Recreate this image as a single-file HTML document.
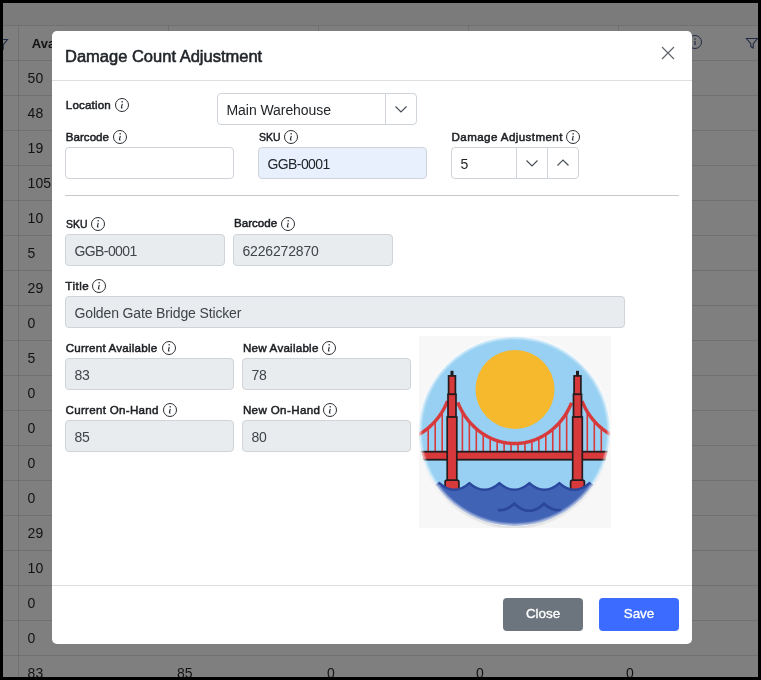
<!DOCTYPE html>
<html><head><meta charset="utf-8">
<style>
*{box-sizing:border-box;margin:0;padding:0}
html,body{width:761px;height:680px;overflow:hidden;background:#000;font-family:"Liberation Sans",sans-serif}
#bg{will-change:transform;position:absolute;left:3px;top:3px;width:755px;height:674px;background:#7f7f7f;overflow:hidden}
.hl{position:absolute;left:0;width:755px;height:1px;background:#6f7072}
.vl{position:absolute;width:1px;background:#6f7072}
.cell{position:absolute;font-size:14px;color:#111214;line-height:1;white-space:nowrap}
#modal{will-change:transform;position:absolute;left:52px;top:31px;width:640px;height:613px;background:#fff;border-radius:5px;overflow:hidden}
.a{position:absolute}
.title{font-size:16.5px;color:#212529;-webkit-text-stroke:0.55px #212529;white-space:nowrap;line-height:1}
.lbl{position:absolute;font-size:11.6px;color:#212529;-webkit-text-stroke:0.5px #1c1f23;color:#1c1f23;letter-spacing:0.2px;white-space:nowrap;line-height:1}
.ic{position:relative;vertical-align:top;top:-2.08px;margin-left:3px}
.inp{position:absolute;height:32px;border:1px solid #ced4da;border-radius:4px;background:#fff;font-size:14px;color:#212529;line-height:1;white-space:nowrap;letter-spacing:-0.15px}
.inp span{position:absolute;top:8.95px}
.dis{background:#e9ecef;color:#3f4449}
.btn{position:absolute;top:567px;width:80px;height:33px;border-radius:4px;color:#fff;font-size:13.4px;-webkit-text-stroke:0.35px #fff;text-align:center;line-height:32px}
</style></head><body>
<div id="bg">
<div class="a" style="left:0;top:0;width:755px;height:22px;background:#7b7b7c"></div>
<div class="hl" style="top:22px"></div>
<div class="hl" style="top:57px"></div>
<div class="hl" style="top:92px"></div>
<div class="hl" style="top:127px"></div>
<div class="hl" style="top:162px"></div>
<div class="hl" style="top:197px"></div>
<div class="hl" style="top:232px"></div>
<div class="hl" style="top:267px"></div>
<div class="hl" style="top:302px"></div>
<div class="hl" style="top:337px"></div>
<div class="hl" style="top:372px"></div>
<div class="hl" style="top:407px"></div>
<div class="hl" style="top:442px"></div>
<div class="hl" style="top:477px"></div>
<div class="hl" style="top:512px"></div>
<div class="hl" style="top:547px"></div>
<div class="hl" style="top:582px"></div>
<div class="hl" style="top:617px"></div>
<div class="hl" style="top:652px"></div>
<div class="vl" style="left:15px;top:22px;height:660px"></div>
<div class="vl" style="left:165px;top:22px;height:35px"></div>
<div class="vl" style="left:315px;top:22px;height:35px"></div>
<div class="vl" style="left:465px;top:22px;height:35px"></div>
<div class="vl" style="left:615px;top:22px;height:35px"></div>
<div class="cell" style="left:24.6px;top:67.5px">50</div>
<div class="cell" style="left:24.6px;top:102.5px">48</div>
<div class="cell" style="left:24.6px;top:137.5px">19</div>
<div class="cell" style="left:24.6px;top:172.5px">105</div>
<div class="cell" style="left:24.6px;top:207.5px">10</div>
<div class="cell" style="left:24.6px;top:242.5px">5</div>
<div class="cell" style="left:24.6px;top:277.5px">29</div>
<div class="cell" style="left:24.6px;top:312.5px">0</div>
<div class="cell" style="left:24.6px;top:347.5px">5</div>
<div class="cell" style="left:24.6px;top:382.5px">0</div>
<div class="cell" style="left:24.6px;top:417.5px">0</div>
<div class="cell" style="left:24.6px;top:452.5px">0</div>
<div class="cell" style="left:24.6px;top:487.5px">0</div>
<div class="cell" style="left:24.6px;top:522.5px">29</div>
<div class="cell" style="left:24.6px;top:557.5px">10</div>
<div class="cell" style="left:24.6px;top:592.5px">0</div>
<div class="cell" style="left:24.6px;top:627.5px">0</div>
<div class="cell" style="left:24.6px;top:662.5px">83</div>
<div class="cell" style="left:174px;top:662.5px">85</div>
<div class="cell" style="left:324px;top:662.5px">0</div>
<div class="cell" style="left:473px;top:662.5px">0</div>
<div class="cell" style="left:623px;top:662.5px">0</div>
<div class="cell" style="left:28.8px;top:33.6px;font-weight:bold;font-size:13px">Avai</div>
<svg class="a" style="left:-8px;top:34px" width="14" height="14" viewBox="0 0 14 14"><path d="M1.5 2.5H12.5L8.2 7.6V12L5.8 10.6V7.6Z" fill="none" stroke="#1f2a44" stroke-width="1.1"/></svg>
<svg class="a" style="left:684px;top:31px" width="16" height="16" viewBox="0 0 16 16"><circle cx="8" cy="8" r="6.5" fill="none" stroke="#1f2a44" stroke-width="1"/><circle cx="8" cy="5" r="0.8" fill="#1f2a44"/><path d="M8 7V11" stroke="#1f2a44" stroke-width="1.2"/></svg>
<svg class="a" style="left:742px;top:33px" width="14" height="14" viewBox="0 0 14 14"><path d="M1.5 2.5H12.5L8.2 7.6V12L5.8 10.6V7.6Z" fill="none" stroke="#1f2a44" stroke-width="1.1"/></svg>
</div>
<div id="modal">
<div class="a title" style="left:13px;top:17.03px">Damage Count Adjustment</div>
<svg class="a" style="left:609px;top:15px" width="14" height="14" viewBox="0 0 14 14"><path d="M1 1L13 13M13 1L1 13" stroke="#5f646b" stroke-width="1.15" fill="none"/></svg>
<div class="a" style="left:0;top:49px;width:640px;height:1px;background:#dedede"></div>
<div class="lbl" style="left:13.8px;top:68.08px;letter-spacing:0.17px">Location</div><svg class="ic" style="position:absolute;margin:0;left:62.00px;top:66.00px" width="16" height="16" viewBox="0 0 16 16"><circle cx="8" cy="8" r="6.5" fill="none" stroke="#2b2f33" stroke-width="1"/><circle cx="8.15" cy="4.85" r="0.8" fill="#2b2f33"/><path d="M8.3 6.9L7.45 10.4Q7.3 11.2 8.5 10.9" fill="none" stroke="#2b2f33" stroke-width="1.15"/></svg>
<div class="inp " style="left:165px;top:62px;width:200px"><span style="left:8.5px;letter-spacing:-0.06px">Main Warehouse</span><div class="a" style="left:167px;top:0;width:1px;height:30px;background:#ced4da"></div><svg class="a" style="left:176px;top:9px" width="14" height="12" viewBox="0 0 14 12"><path d="M1.5 3.5L7 9L12.5 3.5" fill="none" stroke="#495057" stroke-width="1.2"/></svg></div>
<div class="lbl" style="left:13.8px;top:100.28px;letter-spacing:0.00px">Barcode</div><svg class="ic" style="position:absolute;margin:0;left:59.70px;top:98.10px" width="16" height="16" viewBox="0 0 16 16"><circle cx="8" cy="8" r="6.5" fill="none" stroke="#2b2f33" stroke-width="1"/><circle cx="8.15" cy="4.85" r="0.8" fill="#2b2f33"/><path d="M8.3 6.9L7.45 10.4Q7.3 11.2 8.5 10.9" fill="none" stroke="#2b2f33" stroke-width="1.15"/></svg>
<div class="inp " style="left:13px;top:116px;width:169px"></div>
<div class="lbl" style="left:206.5px;top:99.98px;letter-spacing:0.00px;transform:scaleX(0.9);transform-origin:0 0">SKU</div><svg class="ic" style="position:absolute;margin:0;left:230.60px;top:97.90px" width="16" height="16" viewBox="0 0 16 16"><circle cx="8" cy="8" r="6.5" fill="none" stroke="#2b2f33" stroke-width="1"/><circle cx="8.15" cy="4.85" r="0.8" fill="#2b2f33"/><path d="M8.3 6.9L7.45 10.4Q7.3 11.2 8.5 10.9" fill="none" stroke="#2b2f33" stroke-width="1.15"/></svg>
<div class="inp " style="left:206px;top:116px;width:169px;background:#e8f0fe"><span style="left:8.5px;letter-spacing:-0.6px">GGB-0001</span></div>
<div class="lbl" style="left:399.6px;top:100.18px;letter-spacing:0.40px">Damage Adjustment</div><svg class="ic" style="position:absolute;margin:0;left:513.00px;top:98.00px" width="16" height="16" viewBox="0 0 16 16"><circle cx="8" cy="8" r="6.5" fill="none" stroke="#2b2f33" stroke-width="1"/><circle cx="8.15" cy="4.85" r="0.8" fill="#2b2f33"/><path d="M8.3 6.9L7.45 10.4Q7.3 11.2 8.5 10.9" fill="none" stroke="#2b2f33" stroke-width="1.15"/></svg>
<div class="inp " style="left:399px;top:116px;width:128px"><span style="left:8.5px;letter-spacing:-0.4px">5</span><div class="a" style="left:64px;top:0;width:1px;height:30px;background:#ced4da"></div><div class="a" style="left:95px;top:0;width:1px;height:30px;background:#ced4da"></div><svg class="a" style="left:73px;top:9px" width="14" height="12" viewBox="0 0 14 12"><path d="M1.5 3.5L7 9L12.5 3.5" fill="none" stroke="#495057" stroke-width="1.2"/></svg><svg class="a" style="left:104px;top:9px" width="14" height="12" viewBox="0 0 14 12"><path d="M1.5 8.5L7 3L12.5 8.5" fill="none" stroke="#495057" stroke-width="1.2"/></svg></div>
<div class="a" style="left:13px;top:164px;width:614px;height:1px;background:#c9c9c9"></div>
<div class="lbl" style="left:13.5px;top:186.68px;letter-spacing:0.00px;transform:scaleX(0.9);transform-origin:0 0">SKU</div><svg class="ic" style="position:absolute;margin:0;left:37.60px;top:184.80px" width="16" height="16" viewBox="0 0 16 16"><circle cx="8" cy="8" r="6.5" fill="none" stroke="#2b2f33" stroke-width="1"/><circle cx="8.15" cy="4.85" r="0.8" fill="#2b2f33"/><path d="M8.3 6.9L7.45 10.4Q7.3 11.2 8.5 10.9" fill="none" stroke="#2b2f33" stroke-width="1.15"/></svg>
<div class="inp dis" style="left:13px;top:203px;width:160px"><span style="left:8.5px;letter-spacing:-0.6px">GGB-0001</span></div>
<div class="lbl" style="left:182.0px;top:186.48px;letter-spacing:0.00px">Barcode</div><svg class="ic" style="position:absolute;margin:0;left:227.60px;top:184.80px" width="16" height="16" viewBox="0 0 16 16"><circle cx="8" cy="8" r="6.5" fill="none" stroke="#2b2f33" stroke-width="1"/><circle cx="8.15" cy="4.85" r="0.8" fill="#2b2f33"/><path d="M8.3 6.9L7.45 10.4Q7.3 11.2 8.5 10.9" fill="none" stroke="#2b2f33" stroke-width="1.15"/></svg>
<div class="inp dis" style="left:181px;top:203px;width:160px"><span style="left:8.5px;letter-spacing:-0.17px">6226272870</span></div>
<div class="lbl" style="left:13.3px;top:248.78px;letter-spacing:0.50px">Title</div><svg class="ic" style="position:absolute;margin:0;left:39.00px;top:246.80px" width="16" height="16" viewBox="0 0 16 16"><circle cx="8" cy="8" r="6.5" fill="none" stroke="#2b2f33" stroke-width="1"/><circle cx="8.15" cy="4.85" r="0.8" fill="#2b2f33"/><path d="M8.3 6.9L7.45 10.4Q7.3 11.2 8.5 10.9" fill="none" stroke="#2b2f33" stroke-width="1.15"/></svg>
<div class="inp dis" style="left:13px;top:265px;width:560px"><span style="left:8.5px;letter-spacing:-0.14px">Golden Gate Bridge Sticker</span></div>
<div class="lbl" style="left:13.7px;top:310.78px;letter-spacing:0.21px">Current Available</div><svg class="ic" style="position:absolute;margin:0;left:108.80px;top:308.70px" width="16" height="16" viewBox="0 0 16 16"><circle cx="8" cy="8" r="6.5" fill="none" stroke="#2b2f33" stroke-width="1"/><circle cx="8.15" cy="4.85" r="0.8" fill="#2b2f33"/><path d="M8.3 6.9L7.45 10.4Q7.3 11.2 8.5 10.9" fill="none" stroke="#2b2f33" stroke-width="1.15"/></svg>
<div class="inp dis" style="left:13px;top:327px;width:169px"><span style="left:8.5px;letter-spacing:-0.4px">83</span></div>
<div class="lbl" style="left:190.9px;top:310.68px;letter-spacing:0.24px">New Available</div><svg class="ic" style="position:absolute;margin:0;left:269.40px;top:308.70px" width="16" height="16" viewBox="0 0 16 16"><circle cx="8" cy="8" r="6.5" fill="none" stroke="#2b2f33" stroke-width="1"/><circle cx="8.15" cy="4.85" r="0.8" fill="#2b2f33"/><path d="M8.3 6.9L7.45 10.4Q7.3 11.2 8.5 10.9" fill="none" stroke="#2b2f33" stroke-width="1.15"/></svg>
<div class="inp dis" style="left:190px;top:327px;width:169px"><span style="left:8.5px;letter-spacing:-0.4px">78</span></div>
<div class="lbl" style="left:13.5px;top:372.98px;letter-spacing:0.29px">Current On-Hand</div><svg class="ic" style="position:absolute;margin:0;left:110.40px;top:370.80px" width="16" height="16" viewBox="0 0 16 16"><circle cx="8" cy="8" r="6.5" fill="none" stroke="#2b2f33" stroke-width="1"/><circle cx="8.15" cy="4.85" r="0.8" fill="#2b2f33"/><path d="M8.3 6.9L7.45 10.4Q7.3 11.2 8.5 10.9" fill="none" stroke="#2b2f33" stroke-width="1.15"/></svg>
<div class="inp dis" style="left:13px;top:389px;width:169px"><span style="left:8.5px;letter-spacing:-0.4px">85</span></div>
<div class="lbl" style="left:190.9px;top:372.98px;letter-spacing:0.36px">New On-Hand</div><svg class="ic" style="position:absolute;margin:0;left:270.30px;top:370.80px" width="16" height="16" viewBox="0 0 16 16"><circle cx="8" cy="8" r="6.5" fill="none" stroke="#2b2f33" stroke-width="1"/><circle cx="8.15" cy="4.85" r="0.8" fill="#2b2f33"/><path d="M8.3 6.9L7.45 10.4Q7.3 11.2 8.5 10.9" fill="none" stroke="#2b2f33" stroke-width="1.15"/></svg>
<div class="inp dis" style="left:190px;top:389px;width:169px"><span style="left:8.5px;letter-spacing:-0.4px">80</span></div>
<svg class="a" style="left:367px;top:305px" width="192" height="192" viewBox="0 0 192 192">
<rect width="192" height="192" fill="#f7f7f7"/>
<defs><clipPath id="cc"><ellipse cx="95.5" cy="95.3" rx="95.3" ry="94.60000000000001"/></clipPath><filter id="sh" x="-10%" y="-10%" width="120%" height="120%"><feGaussianBlur stdDeviation="1.3"/></filter></defs>
<ellipse cx="95.5" cy="96.89999999999999" rx="94.6" ry="94.9" fill="#c9c9c9" filter="url(#sh)"/>
<ellipse cx="95.5" cy="95.3" rx="95.6" ry="94.9" fill="#ffffff"/>
<g clip-path="url(#cc)">
<rect width="192" height="192" fill="#97d0f2"/>
<circle cx="96.0" cy="53.4" r="39.5" fill="#f6b82c"/>
<rect x="42.60" y="75.92" width="1.6" height="39.78" fill="#d8393b"/>
<rect x="49.55" y="85.69" width="1.6" height="30.01" fill="#d8393b"/>
<rect x="56.50" y="92.80" width="1.6" height="22.90" fill="#d8393b"/>
<rect x="63.45" y="98.11" width="1.6" height="17.59" fill="#d8393b"/>
<rect x="70.40" y="101.88" width="1.6" height="13.82" fill="#d8393b"/>
<rect x="77.35" y="104.63" width="1.6" height="11.07" fill="#d8393b"/>
<rect x="84.30" y="106.50" width="1.6" height="9.20" fill="#d8393b"/>
<rect x="91.25" y="107.37" width="1.6" height="8.33" fill="#d8393b"/>
<rect x="98.20" y="107.42" width="1.6" height="8.28" fill="#d8393b"/>
<rect x="105.15" y="106.57" width="1.6" height="9.13" fill="#d8393b"/>
<rect x="112.10" y="104.86" width="1.6" height="10.84" fill="#d8393b"/>
<rect x="119.05" y="102.19" width="1.6" height="13.51" fill="#d8393b"/>
<rect x="126.00" y="98.31" width="1.6" height="17.39" fill="#d8393b"/>
<rect x="132.95" y="93.28" width="1.6" height="22.42" fill="#d8393b"/>
<rect x="139.90" y="86.25" width="1.6" height="29.45" fill="#d8393b"/>
<rect x="146.85" y="76.57" width="1.6" height="39.13" fill="#d8393b"/>
<rect x="8.40" y="92.07" width="1.6" height="23.63" fill="#d8393b"/>
<rect x="181.50" y="92.07" width="1.6" height="23.63" fill="#d8393b"/>
<rect x="15.40" y="85.11" width="1.6" height="30.59" fill="#d8393b"/>
<rect x="174.50" y="85.11" width="1.6" height="30.59" fill="#d8393b"/>
<rect x="22.40" y="75.81" width="1.6" height="39.89" fill="#d8393b"/>
<rect x="167.50" y="75.81" width="1.6" height="39.89" fill="#d8393b"/>
<polyline points="38.80,66.40 39.08,67.11 39.37,67.81 39.66,68.51 39.96,69.20 40.27,69.89 40.59,70.58 40.92,71.26 41.25,71.94 41.59,72.62 41.93,73.29 42.29,73.95 42.65,74.61 43.02,75.27 43.39,75.92 43.77,76.57 44.16,77.21 44.56,77.85 44.96,78.48 45.37,79.11 45.78,79.74 46.21,80.36 46.63,80.97 47.07,81.58 47.51,82.18 47.96,82.78 48.41,83.37 48.87,83.96 49.34,84.54 49.81,85.11 50.29,85.69 50.78,86.25 51.27,86.81 51.76,87.36 52.27,87.91 52.78,88.45 53.29,88.98 53.81,89.51 54.34,90.04 54.87,90.55 55.40,91.06 55.95,91.57 56.50,92.06 57.05,92.55 57.61,93.04 58.17,93.52 58.74,93.99 59.31,94.45 59.89,94.91 60.48,95.36 61.07,95.80 61.66,96.24 62.26,96.66 62.87,97.09 63.48,97.50 64.09,97.91 64.71,98.31 65.33,98.70 65.96,99.08 66.59,99.46 67.23,99.83 67.87,100.19 68.52,100.54 69.17,100.89 69.82,101.23 70.48,101.56 71.14,101.88 71.81,102.19 72.48,102.50 73.15,102.79 73.83,103.08 74.51,103.36 75.20,103.63 75.89,103.90 76.58,104.15 77.28,104.40 77.98,104.63 78.69,104.86 79.40,105.08 80.11,105.29 80.82,105.49 81.54,105.68 82.26,105.87 82.99,106.04 83.72,106.20 84.45,106.36 85.18,106.50 85.92,106.64 86.66,106.76 87.40,106.88 88.15,106.99 88.90,107.08 89.65,107.17 90.40,107.25 91.16,107.31 91.92,107.37 92.68,107.42 93.44,107.45 94.21,107.48 94.98,107.49 95.75,107.50 96.14,107.50 96.91,107.49 97.67,107.47 98.44,107.44 99.20,107.39 99.96,107.34 100.72,107.28 101.48,107.21 102.23,107.13 102.98,107.04 103.73,106.93 104.47,106.82 105.21,106.70 105.95,106.57 106.69,106.43 107.42,106.28 108.15,106.12 108.88,105.95 109.60,105.78 110.32,105.59 111.04,105.39 111.75,105.19 112.46,104.97 113.17,104.75 113.87,104.52 114.57,104.28 115.26,104.03 115.95,103.77 116.64,103.50 117.33,103.22 118.01,102.94 118.68,102.65 119.36,102.35 120.03,102.04 120.69,101.72 121.35,101.39 122.01,101.06 122.66,100.72 123.31,100.37 123.95,100.01 124.59,99.65 125.22,99.27 125.85,98.89 126.48,98.50 127.10,98.11 127.72,97.71 128.33,97.29 128.94,96.88 129.54,96.45 130.13,96.02 130.73,95.58 131.31,95.13 131.90,94.68 132.47,94.22 133.04,93.75 133.61,93.28 134.17,92.80 134.73,92.31 135.28,91.82 135.82,91.32 136.36,90.81 136.90,90.29 137.43,89.78 137.95,89.25 138.47,88.72 138.98,88.18 139.48,87.64 139.98,87.09 140.48,86.53 140.97,85.97 141.45,85.40 141.92,84.83 142.39,84.25 142.86,83.66 143.32,83.08 143.77,82.48 144.21,81.88 144.65,81.27 145.08,80.66 145.51,80.05 145.92,79.43 146.34,78.80 146.74,78.17 147.14,77.53 147.53,76.89 147.92,76.25 148.30,75.60 148.67,74.94 149.03,74.28 149.39,73.62 149.74,72.95 150.08,72.28 150.42,71.60 150.75,70.92 151.07,70.24 151.38,69.55 151.69,68.86 151.99,68.16 152.28,67.46 152.56,66.75" fill="none" stroke="#d8393b" stroke-width="3.4"/>
<polyline points="28.50,65.00 28.22,65.71 27.93,66.41 27.64,67.11 27.34,67.80 27.03,68.49 26.71,69.18 26.38,69.86 26.05,70.54 25.71,71.21 25.37,71.88 25.01,72.55 24.65,73.21 24.28,73.87 23.91,74.52 23.53,75.16 23.14,75.81 22.74,76.44 22.34,77.08 21.93,77.70 21.52,78.33 21.09,78.94 20.67,79.56 20.23,80.16 19.79,80.77 19.34,81.36 18.89,81.95 18.43,82.54 17.96,83.12 17.49,83.69 17.01,84.26 16.52,84.83 16.03,85.38 15.54,85.94 15.03,86.48 14.52,87.02 14.01,87.55 13.49,88.08 12.96,88.60 12.43,89.12 11.90,89.63 11.35,90.13 10.80,90.63 10.25,91.11 9.69,91.60 9.13,92.07 8.56,92.54 7.99,93.00 7.41,93.46 6.82,93.91 6.23,94.35 5.64,94.78 5.04,95.21 4.43,95.63 3.82,96.04 3.21,96.45 2.59,96.85 1.97,97.24 1.34,97.62 0.71,98.00 0.07,98.36 -0.57,98.72 -1.22,99.08 -1.87,99.42 -2.52,99.76 -3.18,100.09 -3.84,100.41 -4.51,100.72 -5.18,101.02 -5.85,101.32 -6.53,101.60 -7.21,101.88 -7.90,102.15 -8.59,102.42 -9.28,102.67 -9.98,102.91 -10.68,103.15 -11.39,103.37 -12.10,103.59 -12.81,103.80 -13.52,104.00 -14.24,104.19 -14.96,104.37 -15.69,104.55 -16.42,104.71 -17.15,104.86 -17.88,105.01 -18.62,105.14 -19.36,105.27 -20.10,105.38 -20.85,105.49 -21.60,105.59 -22.35,105.67 -23.10,105.75 -23.86,105.81 -24.62,105.87 -25.38,105.92 -26.14,105.95 -26.91,105.98 -27.68,105.99 -28.45,106.00" fill="none" stroke="#d8393b" stroke-width="3.4"/>
<polyline points="163.00,65.00 163.28,65.71 163.57,66.41 163.86,67.11 164.16,67.80 164.47,68.49 164.79,69.18 165.12,69.86 165.45,70.54 165.79,71.21 166.13,71.88 166.49,72.55 166.85,73.21 167.22,73.87 167.59,74.52 167.97,75.16 168.36,75.81 168.76,76.44 169.16,77.08 169.57,77.70 169.98,78.33 170.41,78.94 170.83,79.56 171.27,80.16 171.71,80.77 172.16,81.36 172.61,81.95 173.07,82.54 173.54,83.12 174.01,83.69 174.49,84.26 174.98,84.83 175.47,85.38 175.96,85.94 176.47,86.48 176.98,87.02 177.49,87.55 178.01,88.08 178.54,88.60 179.07,89.12 179.60,89.63 180.15,90.13 180.70,90.63 181.25,91.11 181.81,91.60 182.37,92.07 182.94,92.54 183.51,93.00 184.09,93.46 184.68,93.91 185.27,94.35 185.86,94.78 186.46,95.21 187.07,95.63 187.68,96.04 188.29,96.45 188.91,96.85 189.53,97.24 190.16,97.62 190.79,98.00 191.43,98.36 192.07,98.72 192.72,99.08 193.37,99.42 194.02,99.76 194.68,100.09 195.34,100.41 196.01,100.72 196.68,101.02 197.35,101.32 198.03,101.60 198.71,101.88 199.40,102.15 200.09,102.42 200.78,102.67 201.48,102.91 202.18,103.15 202.89,103.37 203.60,103.59 204.31,103.80 205.02,104.00 205.74,104.19 206.46,104.37 207.19,104.55 207.92,104.71 208.65,104.86 209.38,105.01 210.12,105.14 210.86,105.27 211.60,105.38 212.35,105.49 213.10,105.59 213.85,105.67 214.60,105.75 215.36,105.81 216.12,105.87 216.88,105.92 217.64,105.95 218.41,105.98 219.18,105.99 219.95,106.00" fill="none" stroke="#d8393b" stroke-width="3.4"/>
<rect x="-2" y="115.7" width="196" height="8" fill="#d8393b" stroke="#231c1e" stroke-width="1.8"/>
<rect x="31.5" y="34.8" width="3" height="6" fill="#231c1e"/>
<rect x="29.60" y="39.9" width="6.8" height="18.6" fill="#d8393b" stroke="#231c1e" stroke-width="1.7"/>
<rect x="29.00" y="58.3" width="8.0" height="22.7" fill="#d8393b" stroke="#231c1e" stroke-width="1.7"/>
<rect x="28.20" y="81" width="9.6" height="66" fill="#d8393b" stroke="#231c1e" stroke-width="1.7"/>
<rect x="26.10" y="144.2" width="13.8" height="12" rx="2" fill="#d8393b" stroke="#231c1e" stroke-width="1.7"/>
<rect x="157.0" y="34.8" width="3" height="6" fill="#231c1e"/>
<rect x="155.10" y="39.9" width="6.8" height="18.6" fill="#d8393b" stroke="#231c1e" stroke-width="1.7"/>
<rect x="154.50" y="58.3" width="8.0" height="22.7" fill="#d8393b" stroke="#231c1e" stroke-width="1.7"/>
<rect x="153.70" y="81" width="9.6" height="66" fill="#d8393b" stroke="#231c1e" stroke-width="1.7"/>
<rect x="151.60" y="144.2" width="13.8" height="12" rx="2" fill="#d8393b" stroke="#231c1e" stroke-width="1.7"/>
<path d="M-39.6 147.1 Q-24.6 160.5 -9.6 147.1 Q5.4 160.5 20.4 147.1 Q35.4 160.5 50.4 147.1 Q65.4 160.5 80.4 147.1 Q95.4 160.5 110.4 147.1 Q125.4 160.5 140.4 147.1 Q155.4 160.5 170.4 147.1 Q185.4 160.5 200.4 147.1 L220 200 L-40 200 Z" fill="#4163b5" stroke="#2a479d" stroke-width="2.4" stroke-linejoin="round"/>
<path d="M79.9 174.1 Q87.5 174.8 95.3 167.7 Q103 174.8 110 174.8 Q118 174.8 125 167.7 Q133 174.8 141 174.1" fill="none" stroke="#2a479d" stroke-width="2.8" stroke-linecap="round"/>
</g>
<defs><filter id="rb" x="-5%" y="-5%" width="110%" height="110%"><feGaussianBlur stdDeviation="0.9"/></filter></defs>
<ellipse cx="95.5" cy="95.3" rx="94.8" ry="94.10000000000001" fill="none" stroke="#ffffff" stroke-width="2.2" opacity="0.85" filter="url(#rb)"/>
</svg>
<div class="a" style="left:0;top:554px;width:640px;height:1px;background:#dedede"></div>
<div class="btn" style="left:451px;background:#6c757d">Close</div>
<div class="btn" style="left:547px;background:#3b6cff">Save</div>
</div>
</body></html>
